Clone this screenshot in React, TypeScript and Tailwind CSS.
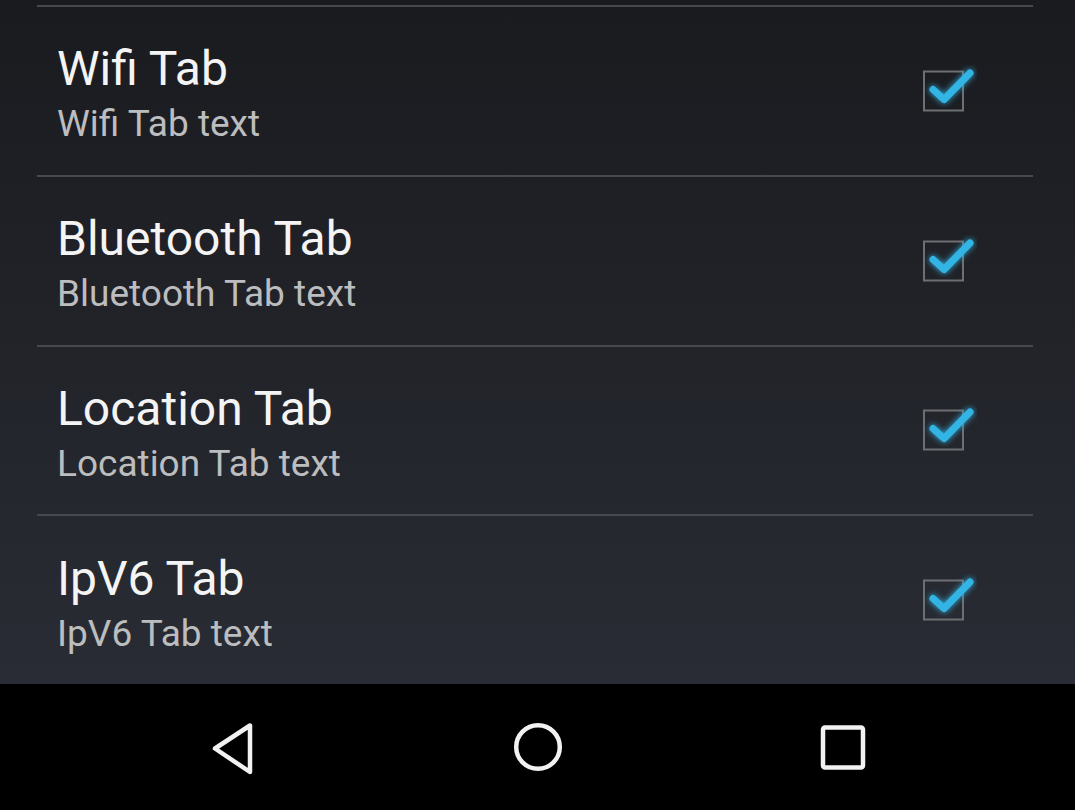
const rows = [
  { title: 'Wifi Tab', sub: 'Wifi Tab text' },
  { title: 'Bluetooth Tab', sub: 'Bluetooth Tab text' },
  { title: 'Location Tab', sub: 'Location Tab text' },
  { title: 'IpV6 Tab', sub: 'IpV6 Tab text' },
];

function Check() {
  return (
    <svg width="62" height="56" viewBox="0 0 62 56" className="shrink-0">
      <defs>
        <filter id="glow" x="-30%" y="-30%" width="160%" height="160%">
          <feGaussianBlur stdDeviation="3" result="b" />
          <feMerge>
            <feMergeNode in="b" />
            <feMergeNode in="SourceGraphic" />
          </feMerge>
        </filter>
      </defs>
      <rect x="9" y="8.5" width="39" height="39" fill="none" stroke="#6e6f72" strokeWidth="2" />
      <polyline
        points="18,26.5 29,36.5 55,10"
        fill="none"
        stroke="#33b5e5"
        strokeWidth="7"
        strokeLinejoin="round"
        strokeLinecap="round"
        filter="url(#glow)"
      />
    </svg>
  );
}

function Row({ title, sub }: { title: string; sub: string }) {
  return (
    <>
      <div className="h-[2px] ml-[37px] mr-[42px] bg-[#46484d]" />
      <div className="h-[168px] ml-[37px] mr-[42px] flex items-center justify-between pl-[20px] pr-[56px]">
        <div className="pt-[5px]">
          <div className="text-[48px] leading-[58px] text-[#f4f4f4]">{title}</div>
          <div className="text-[37px] leading-[44px] mt-[4px] text-[#bcbdbf]">{sub}</div>
        </div>
        <Check />
      </div>
    </>
  );
}

export default function App() {
  return (
    <div
      className="w-[1075px] h-[810px] flex flex-col overflow-hidden bg-black"
      style={{ fontFamily: 'Roboto, "Liberation Sans", sans-serif' }}
    >
      <div className="h-[684px] flex flex-col bg-gradient-to-b from-[#1a1b1f] to-[#292c34] overflow-hidden">
        <div className="h-[5px] shrink-0" />
        {rows.map(r => (
          <Row key={r.title} title={r.title} sub={r.sub} />
        ))}
      </div>
      <div className="flex-1 bg-black flex items-center justify-center gap-[206px]">
        <div className="w-[100px] flex justify-center">
          <svg width="60" height="60" viewBox="0 0 60 60">
            <path d="M48 8.5 L48 55 L13 31.5 Z" fill="none" stroke="#f2f2f2" strokeWidth="4.5" strokeLinejoin="round" />
          </svg>
        </div>
        <div className="w-[100px] flex justify-center">
          <svg width="60" height="60" viewBox="0 0 60 60">
            <circle cx="30" cy="30" r="21.8" fill="none" stroke="#f2f2f2" strokeWidth="4.5" />
          </svg>
        </div>
        <div className="w-[100px] flex justify-center">
          <svg width="60" height="60" viewBox="0 0 60 60">
            <rect x="9" y="10.5" width="40" height="40" rx="2" fill="none" stroke="#f2f2f2" strokeWidth="4.5" />
          </svg>
        </div>
      </div>
    </div>
  );
}
